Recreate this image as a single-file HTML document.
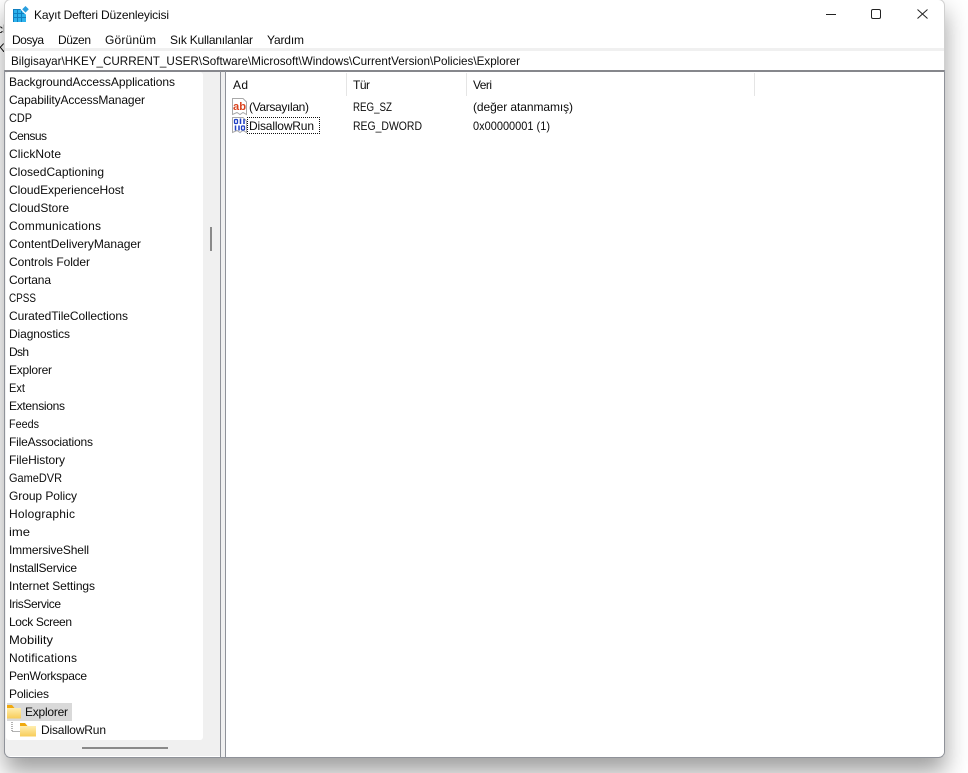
<!DOCTYPE html>
<html><head><meta charset="utf-8">
<style>
html,body{margin:0;padding:0;width:968px;height:773px;overflow:hidden;background:#fff}
*{box-sizing:border-box}
svg{position:absolute;left:0;top:0}
text{font-family:"Liberation Sans","DejaVu Sans",sans-serif;font-size:12px;fill:#0c0c0c}
</style></head><body>
<svg width="968" height="773" viewBox="0 0 968 773" xmlns="http://www.w3.org/2000/svg">
<defs>
<filter id="blur" x="-10%" y="-10%" width="120%" height="120%"><feGaussianBlur stdDeviation="12"/></filter>
<linearGradient id="fold" x1="0" x2="0" y1="0" y2="1"><stop offset="0" stop-color="#ffeeb0"/><stop offset="1" stop-color="#f8cc58"/></linearGradient>
</defs>
<rect x="0" y="0" width="968" height="773" fill="#fff"/>
<text x="-3" y="33" fill="#333">cl</text>
<text x="-3" y="52" fill="#333">K</text>
<rect x="5" y="12" width="940" height="760" fill="#000" fill-opacity=".38" filter="url(#blur)"/>
<!-- window body -->
<rect x="4.500" y="-0.500" width="940" height="758" rx="6" fill="#fff" stroke="#d0d0d0"/>
<rect x="5" y="48" width="939" height="3" fill="#f0f0f0"/>
<rect x="5" y="70" width="939.500" height="2" fill="#86878c"/>
<rect x="5" y="72" width="939" height="684" fill="#f0f0f0"/>
<rect x="6" y="72" width="197" height="668" rx="3" fill="#fff"/>
<path d="M4.500 70V751.500a6 6 0 0 0 6 6H938.500a6 6 0 0 0 6-6V70" fill="none" stroke="#8f9299"/>
<rect x="221" y="72" width="4" height="685" fill="#f0f0f0"/>
<rect x="220" y="71" width="1" height="686" fill="#8f9299"/>
<rect x="225" y="71" width="1" height="686" fill="#8f9299"/>
<path d="M226 72H944V751.500a5 5 0 0 1-5 5H226z" fill="#fff"/>
<rect x="210" y="227" width="2" height="24" fill="#8a8a8a"/>
<rect x="82" y="747" width="86" height="2" fill="#8a8a8a"/>

<!-- title icon -->
<g>
<rect x="13" y="9" width="13" height="13" fill="#2db2ec"/>
<path d="M13 9.500H26M13 13.500H26M13 17.500H26M13.500 9V22M17.500 9V22M21.500 9V22" stroke="#107fc0" stroke-width="1"/>
<path d="M25.500 4.500l5 5-5 5-5-5z" fill="#fff"/>
<path d="M25.500 6l3.300 3.300-3.300 3.300-3.300-3.300z" fill="#2a9ede"/>
</g>
<text x="34" y="19" textLength="135">Kayıt Defteri Düzenleyicisi</text>

<!-- window buttons -->
<path d="M826 14.500H836" stroke="#222" stroke-width="1"/>
<rect x="871.500" y="9.500" width="9" height="9" rx="1.500" fill="none" stroke="#222" stroke-width="1"/>
<path d="M917.500 9.500L927.500 18.500M927.500 9.500L917.500 18.500" stroke="#222" stroke-width="1"/>

<!-- menu -->
<text x="12" y="44" textLength="32">Dosya</text>
<text x="58" y="44" textLength="33">Düzen</text>
<text x="105" y="44" textLength="51">Görünüm</text>
<text x="170" y="44" textLength="83">Sık Kullanılanlar</text>
<text x="267" y="44" textLength="37">Yardım</text>

<!-- address -->
<text x="11" y="65" textLength="509" lengthAdjust="spacingAndGlyphs">Bilgisayar\HKEY_CURRENT_USER\Software\Microsoft\Windows\CurrentVersion\Policies\Explorer</text>

<!-- tree -->
<text x="9" y="86" textLength="166">BackgroundAccessApplications</text>
<text x="9" y="104" textLength="136">CapabilityAccessManager</text>
<text x="9" y="122" textLength="23" lengthAdjust="spacingAndGlyphs">CDP</text>
<text x="9" y="140" textLength="38">Census</text>
<text x="9" y="158" textLength="52">ClickNote</text>
<text x="9" y="176" textLength="95">ClosedCaptioning</text>
<text x="9" y="194" textLength="115">CloudExperienceHost</text>
<text x="9" y="212" textLength="60">CloudStore</text>
<text x="9" y="230" textLength="92">Communications</text>
<text x="9" y="248" textLength="132">ContentDeliveryManager</text>
<text x="9" y="266" textLength="81">Controls Folder</text>
<text x="9" y="284" textLength="42">Cortana</text>
<text x="9" y="302" textLength="27" lengthAdjust="spacingAndGlyphs">CPSS</text>
<text x="9" y="320" textLength="119">CuratedTileCollections</text>
<text x="9" y="338" textLength="61">Diagnostics</text>
<text x="9" y="356" textLength="20">Dsh</text>
<text x="9" y="374" textLength="43">Explorer</text>
<text x="9" y="392" textLength="16" lengthAdjust="spacingAndGlyphs">Ext</text>
<text x="9" y="410" textLength="56">Extensions</text>
<text x="9" y="428" textLength="30" lengthAdjust="spacingAndGlyphs">Feeds</text>
<text x="9" y="446" textLength="84">FileAssociations</text>
<text x="9" y="464" textLength="56">FileHistory</text>
<text x="9" y="482" textLength="53" lengthAdjust="spacingAndGlyphs">GameDVR</text>
<text x="9" y="500" textLength="68">Group Policy</text>
<text x="9" y="518" textLength="66">Holographic</text>
<text x="9" y="536" textLength="21" lengthAdjust="spacingAndGlyphs">ime</text>
<text x="9" y="554" textLength="80">ImmersiveShell</text>
<text x="9" y="572" textLength="68">InstallService</text>
<text x="9" y="590" textLength="86">Internet Settings</text>
<text x="9" y="608" textLength="52">IrisService</text>
<text x="9" y="626" textLength="63">Lock Screen</text>
<text x="9" y="644" textLength="44" lengthAdjust="spacingAndGlyphs">Mobility</text>
<text x="9" y="662" textLength="68">Notifications</text>
<text x="9" y="680" textLength="78">PenWorkspace</text>
<text x="9" y="698" textLength="40">Policies</text>
<rect x="7" y="703" width="65" height="18" fill="#d9d9d9"/>
<path d="M7 708H21V718.500H7z" fill="url(#fold)"/>
<path d="M7 705h5l2.500 3H7z" fill="#f0a90e"/>
<text x="25" y="716" textLength="43">Explorer</text>
<path d="M12 722V731.500H20" stroke="#666" stroke-width="1" stroke-dasharray="1 1" fill="none"/>
<path d="M20 726H36V736.500H20z" fill="url(#fold)"/>
<path d="M20 723h5l2.500 3H20z" fill="#f0a90e"/>
<text x="41" y="734" textLength="65">DisallowRun</text>

<!-- list header -->
<path d="M346.500 73V96M466.500 73V96M754.500 73V96" stroke="#e5e5e5" stroke-width="1"/>
<text x="233" y="89" textLength="15">Ad</text>
<text x="353" y="89" textLength="17">Tür</text>
<text x="473" y="89" textLength="19">Veri</text>

<!-- row icons -->
<path d="M232.500 98.500H243L246.500 102V114.500L243 112.500L240 114.500L237 112.500L232.500 114.500z" fill="#fff" stroke="#a9a9a9" stroke-width="1"/>
<text x="233" y="110" style="font-size:11px;font-weight:bold;fill:#d9431e" textLength="13" lengthAdjust="spacingAndGlyphs">ab</text>
<path d="M232.500 117.500H243L246.500 121V132.500L243 130.500L240 132.500L237 130.500L232.500 132.500z" fill="#fff" stroke="#a9a9a9" stroke-width="1"/>
<rect x="234.500" y="119.500" width="3" height="4" rx="1" fill="none" stroke="#1f3fc4" stroke-width="1.300"/>
<path d="M240.500 118.500V124M244 119V124M235.500 125.500V130.500M239 125.500V130.500" stroke="#1f3fc4" stroke-width="1.500"/>
<rect x="241.500" y="126" width="3" height="4" rx="1" fill="none" stroke="#1f3fc4" stroke-width="1.300"/>

<!-- rows -->
<text x="249" y="111" textLength="60">(Varsayılan)</text>
<text x="353" y="111" textLength="39" lengthAdjust="spacingAndGlyphs">REG_SZ</text>
<text x="473" y="111" textLength="100">(değer atanmamış)</text>
<path d="M247 117.500H320M247 133.500H320M247.500 117V134M319.500 117V134" fill="none" stroke="#111" stroke-width="1" stroke-dasharray="1 1"/>
<text x="249" y="130" textLength="65">DisallowRun</text>
<text x="353" y="130" textLength="69" lengthAdjust="spacingAndGlyphs">REG_DWORD</text>
<text x="473" y="130" textLength="77" lengthAdjust="spacingAndGlyphs">0x00000001 (1)</text>
</svg>
</body></html>
